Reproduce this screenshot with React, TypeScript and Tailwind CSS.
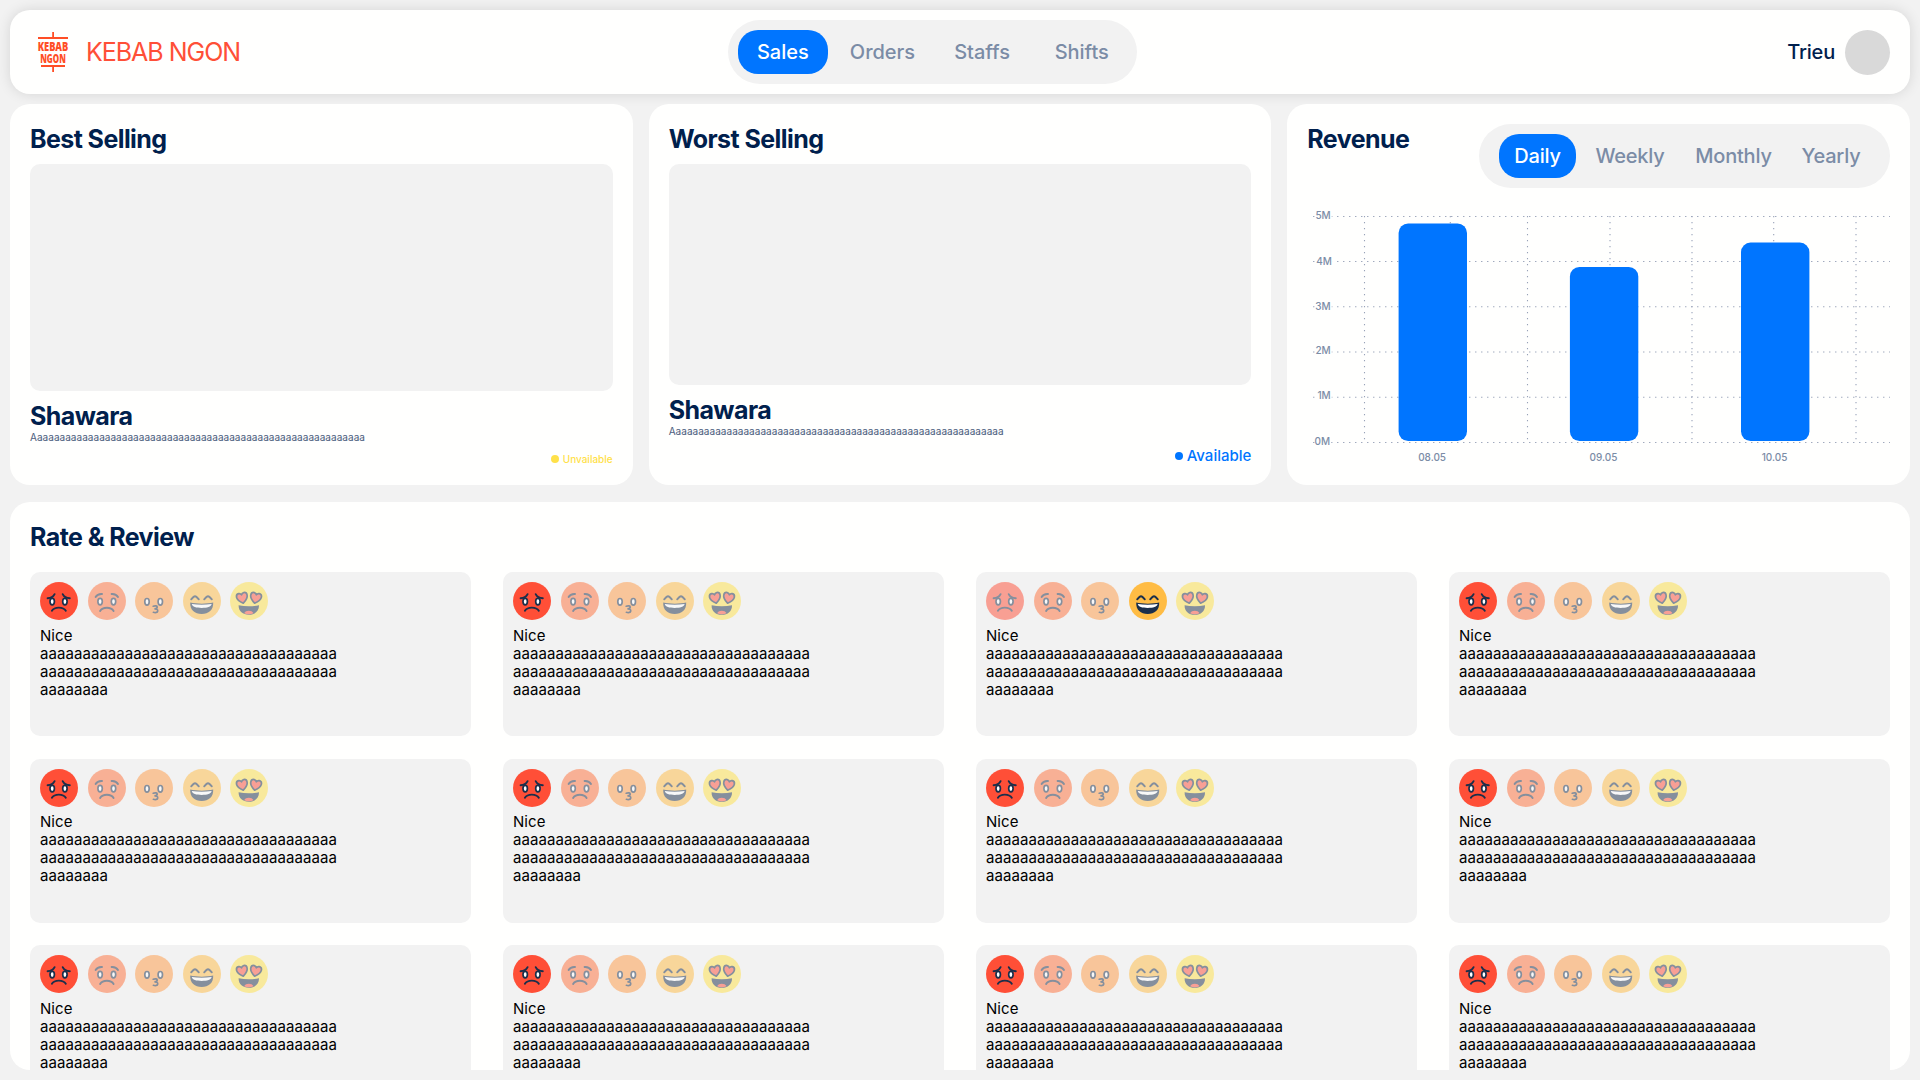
const INK = "#1b2f4b";

function Eye({ x, y = 19.6 }: { x: number; y?: number }) {
  return <ellipse cx={x} cy={y} rx="2.2" ry="3.3" fill="#fff" stroke={INK} strokeWidth="1.7" />;
}

function Heart({ x, tilt }: { x: number; tilt: number }) {
  return (
    <path
      transform={`translate(${x} 15.9) rotate(${tilt})`}
      d="M0 5.4C-3.4 3-5.4.8-5.4-1.7-5.4-3.7-4-4.9-2.6-4.9-1.4-4.9-.5-4.2 0-3.2.5-4.2 1.4-4.9 2.6-4.9 4-4.9 5.4-3.7 5.4-1.7 5.4.8 3.4 3 0 5.4Z"
      fill="#ff4f3b"
      stroke={INK}
      strokeWidth="1.7"
      strokeLinejoin="round"
    />
  );
}

const faces = [
  {
    color: "#ff4f37",
    art: (
      <>
        <Eye x={12.2} />
        <Eye x={24.9} />
        <path d="M7.6 16.3C11.2 16.2 13.2 15 14.6 12.2" />
        <path d="M29.8 16.3C26.2 16.2 24 15 22.7 12.2" />
        <path d="M11.9 28.8C14.5 24.6 23.2 24.6 25.8 28.8" />
      </>
    ),
  },
  {
    color: "#ff713b",
    art: (
      <>
        <Eye x={12.1} />
        <Eye x={25.5} />
        <path d="M7.6 15C9 12.6 11.2 11.8 14 12" />
        <path d="M30 15C28.6 12.6 26.4 11.8 23.6 12" />
        <path d="M12.1 29C14.7 24.6 23 24.6 25.6 29" />
      </>
    ),
  },
  {
    color: "#ff9945",
    art: (
      <>
        <Eye x={12} y={19.8} />
        <Eye x={25.3} y={19.8} />
        <path d="M18.2 24.2C20.4 23.4 22.4 23.8 22.2 25.2C22.1 26.2 20.9 26.8 19.4 26.9C21.6 26.8 23 27.6 22.7 29C22.4 30.6 20.4 31 18.4 30.3" strokeWidth="1.7" />
      </>
    ),
  },
  {
    color: "#ffbc44",
    art: (
      <>
        <path d="M8.2 17.3C9.6 15.6 10.8 14.2 12 14.2S14.4 15.6 15.8 17.3" />
        <path d="M21.2 17.3C22.6 15.6 23.8 14.2 25 14.2S27.4 15.6 28.8 17.3" />
        <path d="M7.2 20.6C14 22 23.6 22 30.2 20.6C30.6 28 25.6 32.1 18.7 32.1S6.8 28 7.2 20.6Z" fill={INK} stroke="none" />
        <path d="M8.8 22.1C15 23.1 22.4 23.1 28.6 22.1C28.2 25 24 26 18.7 26S9.2 25 8.8 22.1Z" fill="#fff" stroke="none" />
      </>
    ),
  },
  {
    color: "#ffe149",
    art: (
      <>
        <Heart x={12.2} tilt={-12} />
        <Heart x={25.7} tilt={12} />
        <path d="M8.6 23.2C15 24.6 22.6 24.6 29 23.2C29.2 29.4 24.8 32.8 18.8 32.8S8.4 29.4 8.6 23.2Z" fill={INK} stroke="none" />
        <path d="M14.1 31.3C15.6 28 22 28 23.5 31.3C20.8 32.7 16.8 32.7 14.1 31.3Z" fill="#ff4f3b" stroke="none" />
      </>
    ),
  },
];

function Rating({ active }: { active: number }) {
  return (
    <div className="flex gap-[9.5px]">
      {faces.map((face, i) => (
        <svg key={face.color} viewBox="0 0 38 38" className={i === active ? "size-[38px]" : "size-[38px] opacity-50"}>
          <circle cx="19" cy="19" r="19" fill={face.color} />
          <g fill="none" stroke={INK} strokeWidth="1.9" strokeLinecap="round">
            {face.art}
          </g>
        </svg>
      ))}
    </div>
  );
}

function Review({ active }: { active: number }) {
  return (
    <article className="h-[164px] rounded-[10px] bg-[#f2f2f2] p-2.5">
      <Rating active={active} />
      <div className="mt-[6.9px] text-[15px] leading-[18px] tracking-[0.06px] text-black">
        <p>Nice</p>
        <p>{"a".repeat(35)}</p>
        <p>{"a".repeat(35)}</p>
        <p>{"a".repeat(8)}</p>
      </div>
    </article>
  );
}

function Logo() {
  return (
    <svg viewBox="0 0 30 40" className="h-10 w-[30px] overflow-visible" fill="#ff4e26" fontFamily="'Open Sans', sans-serif" fontWeight="800" fontSize="13">
      <path d="M14.2 0h1.8v5H30v1.9H0V5h14.2zM3 33h24v1.9H16v5.1h-1.8v-5.1H3z" />
      <text x="-0.3" y="19.4" textLength="30.6" lengthAdjust="spacingAndGlyphs">KEBAB</text>
      <text x="2.2" y="31.2" textLength="25.6" lengthAdjust="spacingAndGlyphs">NGON</text>
    </svg>
  );
}

function Header() {
  return (
    <header className="flex h-[84px] items-center rounded-[20px] bg-[#fffffe] pr-5 pl-7 shadow-[0_0_14px_rgba(0,0,0,0.12)]">
      <div className="flex w-[690.3px] items-center gap-[18px]">
        <Logo />
        <span className="text-[25px] leading-[30px] font-[420] tracking-[-1.02px] text-[#ff4f37]">KEBAB NGON</span>
      </div>
      <nav className="flex h-16 w-[409px] items-center justify-between rounded-[32px] bg-[#f2f2f2] px-2.5 text-xl font-[450] text-[#7b8ca6]">
        <a className="flex h-11 w-[90px] items-center justify-center rounded-[20px] bg-[#0075ff] pr-px text-white">Sales</a>
        <a className="flex w-[90px] justify-center pr-px">Orders</a>
        <a className="flex w-[90px] justify-center pr-px">Staffs</a>
        <a className="flex w-[90px] justify-center pr-px">Shifts</a>
      </nav>
      <div className="ml-auto flex items-center gap-2.5">
        <span className="text-xl font-[450] tracking-[-0.2px] text-[#00204d]">Trieu</span>
        <span className="size-[45px] rounded-full bg-[#d9d9d9]" />
      </div>
    </header>
  );
}

const title = "text-[25px] leading-[30px] font-[650] tracking-[-0.58px] text-[#00204d]";

function Product({ heading, available }: { heading: string; available: boolean }) {
  return (
    <section className="flex flex-col rounded-[20px] bg-[#fffffe] p-5">
      <h2 className={title}>{heading}</h2>
      <div className="my-2.5 flex-1 rounded-[10px] bg-[#f2f2f2]" />
      <h3 className={title}>Shawara</h3>
      <p className="text-[10px] leading-3 tracking-[0.04px] text-[#00204d]/75">{"A" + "a".repeat(58)}</p>
      {available ? (
        <div className="mt-2.5 flex items-center justify-end gap-1 text-[15px] leading-[18px] font-medium text-[#0075ff]">
          <span className="size-2 rounded-full bg-[#0075ff]" />
          Available
        </div>
      ) : (
        <div className="mt-2.5 flex items-center justify-end gap-1 text-[10px] leading-3 font-[450] text-[#ffe149]">
          <span className="size-2 rounded-full bg-[#ffe149]" />
          Unvailable
        </div>
      )}
    </section>
  );
}

const rows = [
  { y: 28.5, label: "5M", x: 23.7, ly: 27.8 },
  { y: 73.5, label: "4M", x: 24.9, ly: 73 },
  { y: 118.7, label: "3M", x: 23.7, ly: 118 },
  { y: 164, label: "2M", x: 23.7, ly: 162.7 },
  { y: 209.2, label: "1M", x: 23.7, ly: 207 },
  { y: 254.5, label: "0M", x: 23.2, ly: 253 },
];
const columns = [57.5, 143.3, 220.5, 303, 385, 466.7, 549];
const bars = [
  { x: 91.6, y: 35.4, label: "08.05" },
  { x: 262.9, y: 79, label: "09.05" },
  { x: 434, y: 54.6, label: "10.05" },
];

function Chart() {
  return (
    <svg viewBox="0 0 583 277" className="h-[277px] w-[583px]" fontSize="10" fontWeight="450" fill="#7b8ca6">
      <g stroke="#98a2b8" strokeWidth="1.1" strokeDasharray="1.3 4.7">
        {rows.map((r) => (
          <path key={r.label} d={`M6.1 ${r.y}H583`} />
        ))}
        {columns.map((x) => (
          <path key={x} d={`M${x} 28V254`} />
        ))}
      </g>
      {rows.map((r) => (
        <g key={r.label}>
          <rect x={r.x - 15} y={r.ly - 5} width="16" height="10" fill="#fffffe" />
          <text x={r.x} y={r.ly + 3.6} textAnchor="end">{r.label}</text>
        </g>
      ))}
      {bars.map((b) => (
        <g key={b.label}>
          <rect x={b.x} y={b.y} width="68.4" height={253 - b.y} rx="9.5" fill="#0075ff" />
          <text x={b.x + 33.5} y="273" textAnchor="middle">{b.label}</text>
        </g>
      ))}
    </svg>
  );
}

function Revenue() {
  return (
    <section className="flex flex-col rounded-[20px] bg-[#fffffe] p-5">
      <div className="flex justify-between">
        <h2 className={title}>Revenue</h2>
        <nav className="flex h-16 w-[411px] items-center rounded-[32px] bg-[#f2f2f2] pl-5 text-xl font-[450] tracking-[-0.2px] text-[#7b8ca6]">
          <a className="flex h-11 w-[77px] items-center justify-center rounded-[20px] bg-[#0075ff] text-white">Daily</a>
          <a className="flex w-[108px] justify-center">Weekly</a>
          <a className="flex w-[99px] justify-center">Monthly</a>
          <a className="flex w-24 justify-center">Yearly</a>
        </nav>
      </div>
      <Chart />
    </section>
  );
}

const ratings = [0, 0, 3, 0, 0, 0, 0, 0, 0, 0, 0, 0];

export default function App() {
  return (
    <div className="flex h-[1080px] w-[1920px] flex-col overflow-hidden bg-[#f2f2f2] p-2.5 font-['Inter',sans-serif]">
      <Header />
      <main className="mt-2.5 grid h-[381px] shrink-0 grid-cols-3 gap-4">
        <Product heading="Best Selling" available={false} />
        <Product heading="Worst Selling" available />
        <Revenue />
      </main>
      <section className="mt-[17px] h-[568px] shrink-0 overflow-hidden rounded-[20px] bg-[#fffffe] px-5 pt-5">
        <h2 className={title}>Rate &amp; Review</h2>
        <div className="mt-5 grid grid-cols-4 gap-x-8 gap-y-[22.5px]">
          {ratings.map((active, i) => (
            <Review key={i} active={active} />
          ))}
        </div>
      </section>
    </div>
  );
}
